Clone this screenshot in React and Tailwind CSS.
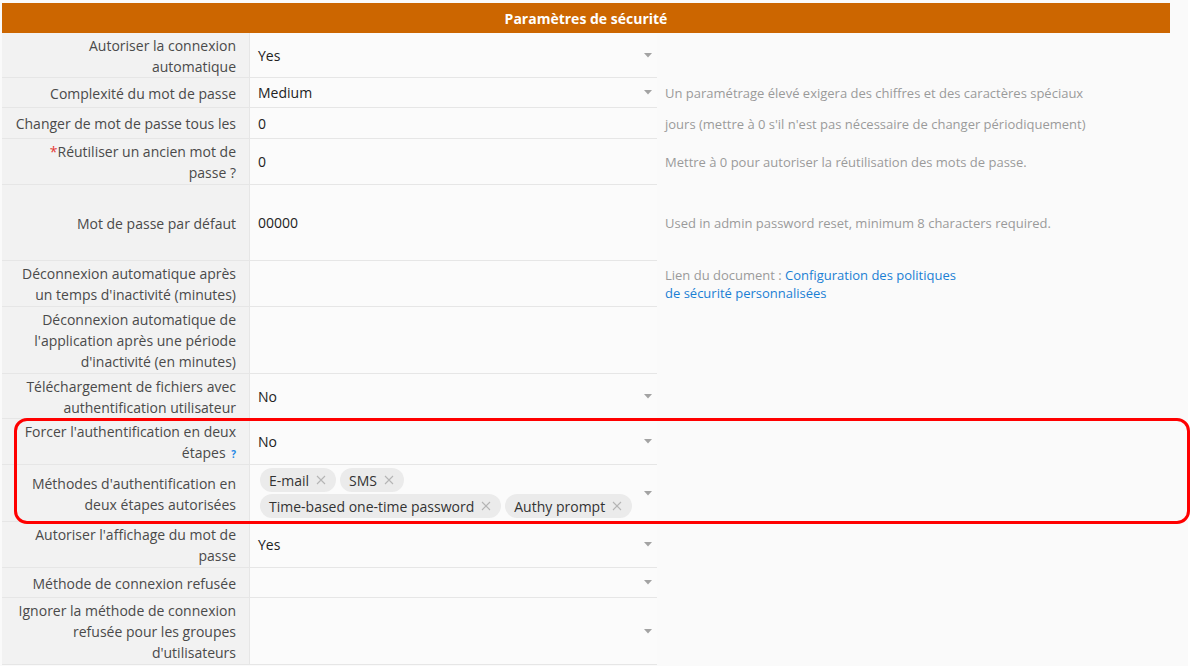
const FONT = { fontFamily: '"Open Sans", "Noto Sans", Arial, sans-serif' }

function Arrow() {
  return (
    <svg width="8" height="5" viewBox="0 0 8 5" className="shrink-0">
      <path d="M0 0h8L4 4.5z" fill="#a3a3a3" />
    </svg>
  )
}

function Tag({ label }) {
  return (
    <span className="flex items-center h-[24px] pl-[9px] pr-[10px] rounded-full bg-[#ebebeb] text-[#333] text-[14px]">
      {label}
      <svg width="10" height="10" viewBox="0 0 10 10" className="ml-[7px]">
        <path d="M1 1l8 8M9 1l-8 8" stroke="#b5b5b5" strokeWidth="1.1" />
      </svg>
    </span>
  )
}

function Row({ label, value, select, desc, tight, valueClass = 'min-h-[30px]', children }) {
  return (
    <div className="flex items-stretch">
      <div className={`w-[247px] shrink-0 bg-[#f2f2f2] border-b border-[#e6e6e6] pr-[13px] pl-2 pt-[2px] flex items-center justify-end text-right text-[14px] leading-[21px] text-[#4a4a4a] ${tight ? 'pb-0' : 'pb-[1px]'}`}>
        <div>{label}</div>
      </div>
      <div className={`w-[408px] shrink-0 bg-[#fbfbfb] border-b border-l border-[#e6e6e6] pl-2 pr-[5px] flex items-center ${valueClass}`}>
        <div className="flex-1 text-[14px] text-[#222]">{children || value}</div>
        {select && <Arrow />}
      </div>
      <div className="flex-1 flex items-center pl-2 text-[13px] leading-[18px] text-[#9a9a9a]">{desc}</div>
    </div>
  )
}

export default function App() {
  return (
    <div className="min-h-screen bg-white" style={FONT}>
      <div className="relative w-[1188px] min-h-[666px] bg-[#fafafa] pl-[2px] pt-[3px]">
        <div className="w-[1168px]">
          <div className="h-[30px] bg-[#cc6600] flex items-center justify-center text-white font-bold text-[14px]">
            Paramètres de sécurité
          </div>
          <Row label={<>Autoriser la connexion<br />automatique</>} value="Yes" select tight />
          <Row label="Complexité du mot de passe" value="Medium" select desc="Un paramétrage élevé exigera des chiffres et des caractères spéciaux" />
          <Row label="Changer de mot de passe tous les" value="0" valueClass="min-h-[31px]" desc="jours (mettre à 0 s'il n'est pas nécessaire de changer périodiquement)" />
          <Row label={<><span className="text-[#e53935]">*</span>Réutiliser un ancien mot de<br />passe ?</>} value="0" desc="Mettre à 0 pour autoriser la réutilisation des mots de passe." />
          <Row label="Mot de passe par défaut" value="00000" valueClass="min-h-[76px]" desc="Used in admin password reset, minimum 8 characters required." />
          <Row
            label={<>Déconnexion automatique après<br />un temps d'inactivité (minutes)</>}
            value=""
            desc={
              <div className="w-[300px]">
                <span>Lien du document : </span>
                <a href="#" className="text-[#1a7fd4]">Configuration des politiques de sécurité personnalisées</a>
              </div>
            }
          />
          <Row label={<>Déconnexion automatique de<br />l'application après une période<br />d'inactivité (en minutes)</>} value="" />
          <Row label={<>Téléchargement de fichiers avec<br />authentification utilisateur</>} value="No" select tight />
          <Row
            label={<>Forcer l'authentification en deux<br />étapes <span className="text-[#1e88e5] text-[10px] leading-none font-bold ml-[2px]">?</span></>}
            value="No"
            select
          />
          <Row label={<>Méthodes d'authentification en<br />deux étapes autorisées</>} select valueClass="min-h-[57px]">
            <div className="flex flex-wrap gap-x-[4px] gap-y-[2px] pr-[4px] ml-[2px]">
              <Tag label="E-mail" />
              <Tag label="SMS" />
              <Tag label="Time-based one-time password" />
              <Tag label="Authy prompt" />
            </div>
          </Row>
          <Row label={<>Autoriser l'affichage du mot de<br />passe</>} value="Yes" select />
          <Row label="Méthode de connexion refusée" value="" select />
          <Row label={<>Ignorer la méthode de connexion<br />refusée pour les groupes<br />d'utilisateurs</>} value="" select />
        </div>
        <div className="absolute left-[14px] top-[418px] w-[1176px] h-[106px] border-[3px] border-[#ff0000] rounded-[13px] pointer-events-none" />
      </div>
    </div>
  )
}
